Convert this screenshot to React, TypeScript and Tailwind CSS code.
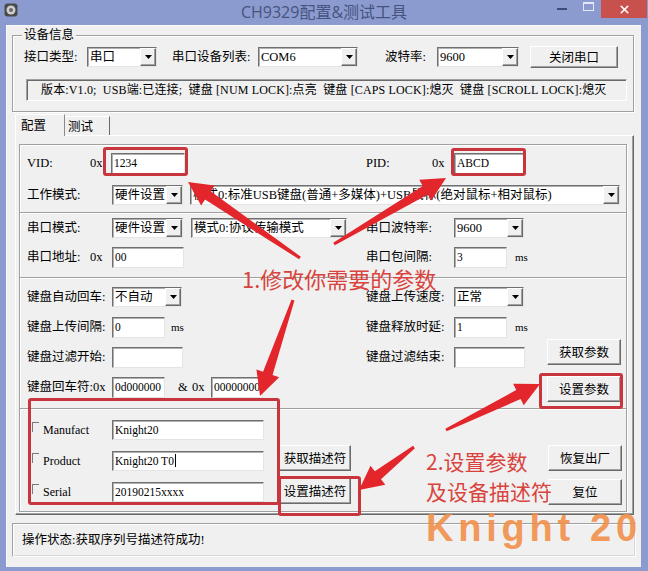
import { X } from "lucide-react";

const sunken =
  "bg-white border border-t-[#707070] border-l-[#707070] border-r-[#e4e4e4] border-b-[#e4e4e4] shadow-[inset_1px_1px_0_#b0b0b0]";
const raised =
  "bg-[#f0f0f0] border border-t-white border-l-white border-r-[#6a6a6a] border-b-[#6a6a6a] shadow-[inset_-1px_-1px_0_#a0a0a0]";
const etched = "border border-[#a0a0a0] shadow-[inset_1px_1px_0_#fff,1px_1px_0_#fff]";
const divider = "border-t border-[#a0a0a0] shadow-[inset_0_1px_0_#fff]";

function Field({ className, value = "", caret }: { className: string; value?: string; caret?: boolean }) {
  return (
    <div className={`${sunken} ${className} flex items-center pl-[2px] text-[11.5px] whitespace-nowrap overflow-hidden`}>
      {value}
      {caret && <span className="ml-px w-px h-[13px] bg-black" />}
    </div>
  );
}

function Combo({ className, value }: { className: string; value: string }) {
  return (
    <div className={`${sunken} ${className} h-[20px] flex items-stretch`}>
      <span className="flex-1 pl-[2px] leading-[18px] whitespace-nowrap overflow-hidden">{value}</span>
      <span className={`${raised} w-[16px] flex items-center justify-center`}>
        <svg width="7" height="4" viewBox="0 0 7 4">
          <path d="M0 0h7L3.5 4z" fill="#000" />
        </svg>
      </span>
    </div>
  );
}

function Btn({ className, label }: { className: string; label: string }) {
  return (
    <div className={`${raised} ${className} flex items-center justify-center font-['Noto_Sans_CJK_SC',sans-serif]`}>
      {label}
    </div>
  );
}

function arrow(x1: number, y1: number, x2: number, y2: number) {
  const L = Math.hypot(x2 - x1, y2 - y1);
  const ux = (x2 - x1) / L;
  const uy = (y2 - y1) / L;
  const nx = -uy;
  const ny = ux;
  const bx = x2 - ux * 24;
  const by = y2 - uy * 24;
  const p = (x: number, y: number, s: number) => `${x + nx * s},${y + ny * s}`;
  return [p(x1, y1, 1.5), p(bx, by, 5), p(bx, by, 12), `${x2},${y2}`, p(bx, by, -12), p(bx, by, -5), p(x1, y1, -1.5)].join(" ");
}

const redBox = "absolute border-[3px] border-[#c9353d] rounded-[3px]";

export default function App() {
  return (
    <div className="w-[648px] h-[571px] relative bg-[#8c9bcf] flex flex-col overflow-hidden font-['Liberation_Serif','Noto_Sans_CJK_SC',serif] text-[12.5px] leading-[16px] text-black">
      {/* title bar */}
      <div className="h-[25px] grid grid-cols-[1fr_auto_1fr] items-start">
        <div className="pt-[3px] pl-[4px]">
          <svg width="14" height="14" viewBox="0 0 14 14">
            <rect x="0.5" y="0.5" width="13" height="13" rx="3" fill="#4a4a4a" />
            <circle cx="7" cy="7" r="4.5" fill="#cfcfcf" />
            <circle cx="7" cy="7" r="2" fill="#6a6a6a" />
          </svg>
        </div>
        <div className="pt-[1px] text-[16px] leading-[22px] text-[#45537f] font-['Open_Sans','Noto_Sans_CJK_SC',sans-serif]">
          CH9329配置&测试工具
        </div>
        <div className="flex justify-end">
          <div className="w-[26px] h-[18px] flex items-center justify-center">
            <div className="w-[10px] h-[2px] bg-[#3d4b78]" />
          </div>
          <div className="w-[26px] h-[18px] flex items-start justify-center pt-[2px]">
            <div className="w-[11px] h-[9px] border border-t-2 border-[#e4e9f7]" />
          </div>
          <div className="w-[46px] h-[18px] mr-px bg-[#c8504d] flex items-center justify-center">
            <X size={13} strokeWidth={3} color="#fff" />
          </div>
        </div>
      </div>

      {/* body */}
      <div className="flex-1 ml-[6px] mr-[7px] mb-[4px] bg-[#f0f0f0] border-l border-t border-[#fafafa] flex flex-col">
        {/* 设备信息 */}
        <div className={`mt-[9px] ml-[5px] w-[622px] h-[77px] ${etched} flex flex-col`}>
          <span className="-mt-[9px] ml-[9px] px-[2px] w-fit bg-[#f0f0f0] leading-[16px] h-[16px]">设备信息</span>
          <div className="mt-[3px] h-[22px] flex items-center pl-[11px]">
            <span className="w-[63px]">接口类型:</span>
            <Combo className="w-[70px]" value="串口" />
            <span className="ml-[15px] w-[86px]">串口设备列表:</span>
            <Combo className="w-[100px]" value="COM6" />
            <span className="ml-[27px] w-[52px]">波特率:</span>
            <Combo className="w-[82px]" value="9600" />
            <Btn className="ml-[11px] w-[88px] h-[22px]" label="关闭串口" />
          </div>
          <div className="mt-[11px] ml-[13px] w-[601px] h-[22px] border border-t-[#a0a0a0] border-l-[#a0a0a0] border-r-white border-b-white shadow-[inset_1px_1px_0_#6a6a6a] flex items-center pl-[14px] text-[12px] tracking-[0.15px] whitespace-nowrap overflow-hidden">
            版本:V1.0;&nbsp; USB端:已连接;&nbsp; 键盘 [NUM LOCK]:点亮&nbsp; 键盘 [CAPS LOCK]:熄灭&nbsp; 键盘 [SCROLL LOCK]:熄灭
          </div>
        </div>

        {/* tabs */}
        <div className="mt-px ml-[8px] h-[22px] flex items-end relative z-10">
          <div className="h-[22px] w-[50px] relative top-px bg-[#f0f0f0] border-t border-l border-white border-r border-r-[#8a8a8a] pl-[5px] leading-[20px] font-['Noto_Sans_CJK_SC',sans-serif]">
            配置
          </div>
          <div className="h-[19px] w-[45px] border-t border-white border-r border-r-[#696969] pl-[3px] leading-[18px] font-['Noto_Sans_CJK_SC',sans-serif]">
            测试
          </div>
        </div>

        {/* tab panel */}
        <div className="ml-[8px] w-[619px] h-[380px] border border-t-white border-l-white border-r-[#696969] border-b-[#696969] shadow-[inset_-1px_-1px_0_#a0a0a0]">
          <div className={`mt-[8px] ml-[3px] w-[608px] h-[368px] ${etched} flex flex-col`}>
            {/* section 1 */}
            <div className="h-[67px] flex flex-col pl-[7px] pt-[7px]">
              <div className="flex h-[22px] items-center">
                <div className="w-[339px] flex items-center">
                  <span className="w-[63px]">VID:</span>
                  <span className="w-[21px]">0x</span>
                  <Field className="w-[74px] h-[21px]" value="1234" />
                </div>
                <span className="w-[66px]">PID:</span>
                <span className="w-[22px]">0x</span>
                <Field className="w-[70px] h-[21px]" value="ABCD" />
              </div>
              <div className="mt-[10px] flex h-[22px] items-center">
                <span className="w-[85px]">工作模式:</span>
                <Combo className="w-[71px]" value="硬件设置" />
                <Combo
                  className="ml-[7px] w-[430px]"
                  value="模式0:标准USB键盘(普通+多媒体)+USB鼠标(绝对鼠标+相对鼠标)"
                />
              </div>
            </div>

            {/* section 2 */}
            <div className={`h-[65px] ${divider} flex flex-col pl-[7px] pt-[4px]`}>
              <div className="flex h-[22px] items-center">
                <div className="w-[339px] flex items-center">
                  <span className="w-[85px]">串口模式:</span>
                  <Combo className="w-[71px]" value="硬件设置" />
                  <Combo className="ml-[8px] w-[156px]" value="模式0:协议传输模式" />
                </div>
                <span className="w-[88px]">串口波特率:</span>
                <Combo className="w-[70px]" value="9600" />
              </div>
              <div className="mt-[7px] flex h-[22px] items-center">
                <div className="w-[339px] flex items-center">
                  <span className="w-[63px]">串口地址:</span>
                  <span className="w-[22px]">0x</span>
                  <Field className="w-[72px] h-[21px]" value="00" />
                </div>
                <span className="w-[88px]">串口包间隔:</span>
                <Field className="w-[53px] h-[21px]" value="3" />
                <span className="ml-[8px] text-[11px]">ms</span>
              </div>
            </div>

            {/* section 3 */}
            <div className={`h-[131px] ${divider} flex`}>
              <div className="w-[527px] flex flex-col pl-[7px] pt-[8px] gap-[8px]">
                <div className="flex h-[22px] items-center">
                  <div className="w-[339px] flex items-center">
                    <span className="w-[85px]">键盘自动回车:</span>
                    <Combo className="w-[70px]" value="不自动" />
                  </div>
                  <span className="w-[88px]">键盘上传速度:</span>
                  <Combo className="w-[70px]" value="正常" />
                </div>
                <div className="flex h-[22px] items-center">
                  <div className="w-[339px] flex items-center">
                    <span className="w-[85px]">键盘上传间隔:</span>
                    <Field className="w-[53px] h-[21px]" value="0" />
                    <span className="ml-[6px] text-[11px]">ms</span>
                  </div>
                  <span className="w-[88px]">键盘释放时延:</span>
                  <Field className="w-[53px] h-[21px]" value="1" />
                  <span className="ml-[8px] text-[11px]">ms</span>
                </div>
                <div className="flex h-[22px] items-center">
                  <div className="w-[339px] flex items-center">
                    <span className="w-[85px]">键盘过滤开始:</span>
                    <Field className="w-[71px] h-[21px]" />
                  </div>
                  <span className="w-[88px]">键盘过滤结束:</span>
                  <Field className="w-[71px] h-[21px]" />
                </div>
                <div className="flex h-[22px] items-center">
                  <span className="w-[85px]">键盘回车符:0x</span>
                  <Field className="w-[53px] h-[21px]" value="0d000000" />
                  <span className="ml-[13px] w-[14px]">&amp;</span>
                  <span className="w-[19px]">0x</span>
                  <Field className="w-[52px] h-[21px]" value="00000000" />
                </div>
              </div>
              <div className="flex flex-col pt-[61px] gap-[11px]">
                <Btn className="w-[74px] h-[26px]" label="获取参数" />
                <Btn className="w-[74px] h-[26px]" label="设置参数" />
              </div>
            </div>

            {/* section 4 */}
            <div className={`h-[103px] ${divider} flex`}>
              <div className="flex flex-col pl-[12px] pt-[10px] gap-[10px]">
                {[
                  ["Manufact", "Knight20", false],
                  ["Product", "Knight20 T0", true],
                  ["Serial", "20190215xxxx", false],
                ].map(([label, value, caret]) => (
                  <div key={label as string} className="flex h-[21px] items-center">
                    <span className="w-[11px] h-[21px] flex items-start pt-[3px]">
                      <span className="w-[7px] h-[10px] border-t border-l border-[#7a7a7a]" />
                    </span>
                    <span className="w-[69px] text-[12px]">{label as string}</span>
                    <Field className="w-[152px] h-[20px]" value={value as string} caret={caret as boolean} />
                  </div>
                ))}
              </div>
              <div className="ml-[15px] flex flex-col pt-[36px] gap-[7px]">
                <Btn className="w-[72px] h-[26px]" label="获取描述符" />
                <Btn className="w-[72px] h-[26px]" label="设置描述符" />
              </div>
              <div className="ml-[197px] flex flex-col pt-[36px] gap-[8px]">
                <Btn className="w-[74px] h-[26px]" label="恢复出厂" />
                <Btn className="w-[74px] h-[26px]" label="复位" />
              </div>
            </div>
          </div>
        </div>

        {/* status */}
        <div className="mt-[8px] ml-[5px] w-[624px] h-[34px] border border-t-[#a0a0a0] border-l-[#a0a0a0] border-r-white border-b-white shadow-[inset_1px_1px_0_#fff,inset_-1px_-1px_0_#d8d8d8] flex items-center pl-[9px]">
          操作状态:获取序列号描述符成功!
        </div>
      </div>

      {/* annotations */}
      <div className="absolute inset-0 pointer-events-none">
        <div className={`${redBox} left-[103px] top-[147px] w-[85px] h-[29px]`} />
        <div className={`${redBox} left-[451px] top-[148px] w-[75px] h-[28px]`} />
        <div className={`${redBox} left-[539px] top-[373px] w-[84px] h-[36px]`} />
        <div className={`${redBox} left-[28px] top-[398px] w-[252px] h-[107px]`} />
        <div className={`${redBox} left-[278px] top-[476px] w-[83px] h-[40px]`} />
        <svg className="absolute inset-0" width="648" height="571">
          <polygon points={arrow(300, 258, 188, 182)} fill="#e3262b" />
          <polygon points={arrow(334, 244, 446, 178)} fill="#e3262b" />
          <polygon points={arrow(293, 300, 260, 396)} fill="#e3262b" />
          <polygon points={arrow(446, 430, 540, 384)} fill="#e3262b" />
          <polygon points={arrow(414, 447, 359, 490)} fill="#e3262b" />
        </svg>
        <div className="absolute left-[242px] top-[267px] text-[22px] leading-none text-[#d9433d] font-['Noto_Sans_CJK_SC',sans-serif]">
          1.修改你需要的参数
        </div>
        <div className="absolute left-[426px] top-[446px] text-[21px] leading-[30px] text-[#d9433d] font-['Noto_Sans_CJK_SC',sans-serif]">
          2.设置参数
          <br />
          及设备描述符
        </div>
        <div className="absolute left-[426px] top-[505px] text-[38px] leading-[46px] font-bold tracking-[0.125em] whitespace-nowrap text-[#f2904a] opacity-90 font-['Liberation_Sans',sans-serif]">
          Knight 20
        </div>
      </div>
    </div>
  );
}
